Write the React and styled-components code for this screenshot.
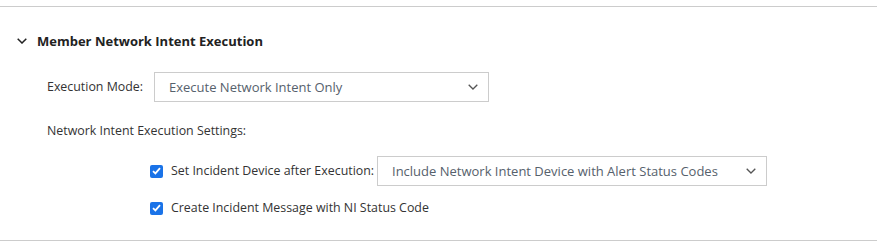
import React from "react";
import styled, { createGlobalStyle } from "styled-components";

const GlobalStyle = createGlobalStyle`
  body {
    margin: 0;
    background: #ffffff;
    font-family: "Open Sans", "Liberation Sans", sans-serif;
    color: #333333;
  }
`;

const Page = styled.div`
  padding-top: 6px;
`;

const Section = styled.section`
  border-top: 1px solid #cccccc;
  border-bottom: 1px solid #cccccc;
  padding-bottom: 23px;
`;

const Header = styled.div`
  display: flex;
  align-items: center;
  height: 24px;
  margin-top: 22px;
  padding-left: 17px;
  gap: 10px;

  h2 {
    margin: 0;
    font-size: 13px;
    font-weight: 700;
    color: #222222;
  }
`;

const Body = styled.div`
  padding-left: 47px;
  font-size: 12.4px;
`;

const Row = styled.div`
  display: flex;
  align-items: center;
  margin-top: ${(p) => p.$top}px;
  padding-left: ${(p) => p.$indent || 0}px;
  min-height: 18px;
`;

const Label = styled.span`
  width: ${(p) => (p.$width ? `${p.$width}px` : "auto")};
  flex-shrink: 0;
  color: #333333;
  line-height: 18px;
`;

const SelectBox = styled.div`
  box-sizing: border-box;
  width: ${(p) => p.$width}px;
  height: 30px;
  border: 1px solid #cccccc;
  display: flex;
  align-items: center;
  justify-content: space-between;
  padding: 0 10px 0 14px;
  color: #56616c;
  font-size: 13px;
`;

const Box = styled.span`
  width: 13px;
  height: 13px;
  border-radius: 2px;
  background: #1a73e8;
  display: inline-flex;
  align-items: center;
  justify-content: center;
  margin-right: 8px;
  flex-shrink: 0;
`;

const Chevron = ({ size = 10, color = "#555", width = 1.3 }) => (
  <svg width={size} height={size * 0.6} viewBox="0 0 10 6" fill="none">
    <path d="M0.7 0.7 L5 5 L9.3 0.7" stroke={color} strokeWidth={width} />
  </svg>
);

const Check = () => (
  <Box>
    <svg width="9" height="8" viewBox="0 0 9 8" fill="none">
      <path d="M1 4.2 L3.4 6.4 L8 1.2" stroke="#fff" strokeWidth="1.8" />
    </svg>
  </Box>
);

const Select = ({ width, value }) => (
  <SelectBox $width={width}>
    <span>{value}</span>
    <Chevron />
  </SelectBox>
);

export default function App() {
  return (
    <Page>
      <GlobalStyle />
      <Section>
        <Header>
          <Chevron size={10} color="#222" width={1.5} />
          <h2>Member Network Intent Execution</h2>
        </Header>
        <Body>
          <Row $top={19}>
            <Label $width={107}>Execution Mode:</Label>
            <Select width={335} value="Execute Network Intent Only" />
          </Row>
          <Row $top={20}>
            <Label>Network Intent Execution Settings:</Label>
          </Row>
          <Row $top={16} $indent={103}>
            <Check />
            <Label $width={206}>Set Incident Device after Execution:</Label>
            <Select width={390} value="Include Network Intent Device with Alert Status Codes" />
          </Row>
          <Row $top={13} $indent={103}>
            <Check />
            <Label>Create Incident Message with NI Status Code</Label>
          </Row>
        </Body>
      </Section>
    </Page>
  );
}
